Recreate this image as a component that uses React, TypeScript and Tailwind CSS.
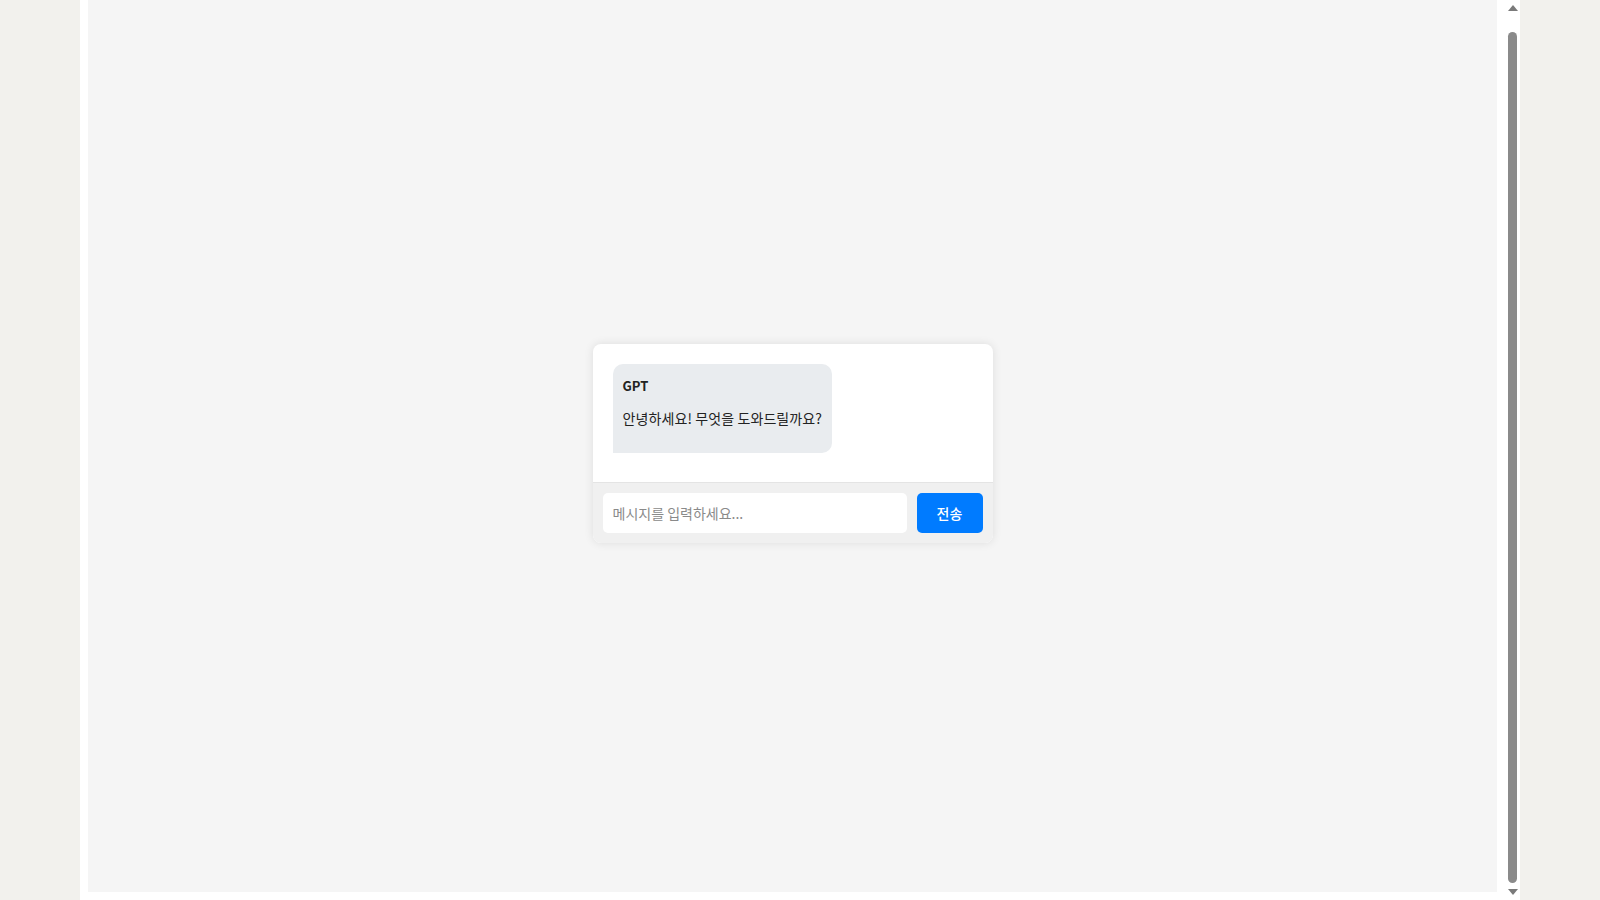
import React, { useState } from 'react';

const FONT = "font-['Noto_Sans_CJK_KR','Noto_Sans',sans-serif]";

function Scrollbar() {
    return (
        <div className="flex w-[15px] shrink-0 flex-col items-center bg-white">
            <div className="mt-[5px] h-0 w-0 border-x-[5px] border-b-[6px] border-x-transparent border-b-[#7a7a7a]" />
            <div className="mt-[21px] w-[9px] flex-1 rounded-full bg-[#8a8a8a]" />
            <div className="mt-[6px] mb-[5px] h-0 w-0 border-x-[5px] border-t-[6px] border-x-transparent border-t-[#7a7a7a]" />
        </div>
    );
}

export default function App() {
    const [text, setText] = useState('');

    return (
        <div className={`flex h-screen w-full bg-[#f2f1ed] ${FONT}`}>
            <div className="ml-[80px] flex h-full w-[1440px] bg-white">
                {/* Page body */}
                <div className="mx-2 mb-2 flex flex-1 items-center justify-center bg-[#f5f5f5] pb-[5px]">
                    <div className="w-[400px] overflow-hidden rounded-[8px] bg-white shadow-[0_0_10px_rgba(0,0,0,0.1)]">
                        {/* Messages */}
                        <div className="px-5 pt-5 pb-[29px]">
                            <div className="inline-block rounded-[10px] rounded-bl-none bg-[#e9ecef] px-[10px] pt-[12px] pb-[25px] text-[#222]">
                                <div className="text-[13px] font-bold leading-[20px]">GPT</div>
                                <div className="mt-[12px] text-[14px] leading-[20px] tracking-[0.1px]">안녕하세요! 무엇을 도와드릴까요?</div>
                            </div>
                        </div>

                        {/* Input */}
                        <div className="flex gap-[10px] border-t border-[#e4e4e4] bg-[#f0f0f0] p-[10px]">
                            <input
                                type="text"
                                placeholder="메시지를 입력하세요..."
                                className="h-10 flex-1 rounded-[5px] bg-white px-[10px] text-[14px] text-[#333] placeholder:text-[#8a8a8a] focus:outline-none"
                                value={text}
                                onChange={e => setText(e.target.value)}
                            />
                            <button className="h-10 w-[66px] rounded-[5px] bg-[#007bff] text-[14px] font-medium text-white">
                                전송
                            </button>
                        </div>
                    </div>
                </div>
                <Scrollbar />
            </div>
        </div>
    );
}
